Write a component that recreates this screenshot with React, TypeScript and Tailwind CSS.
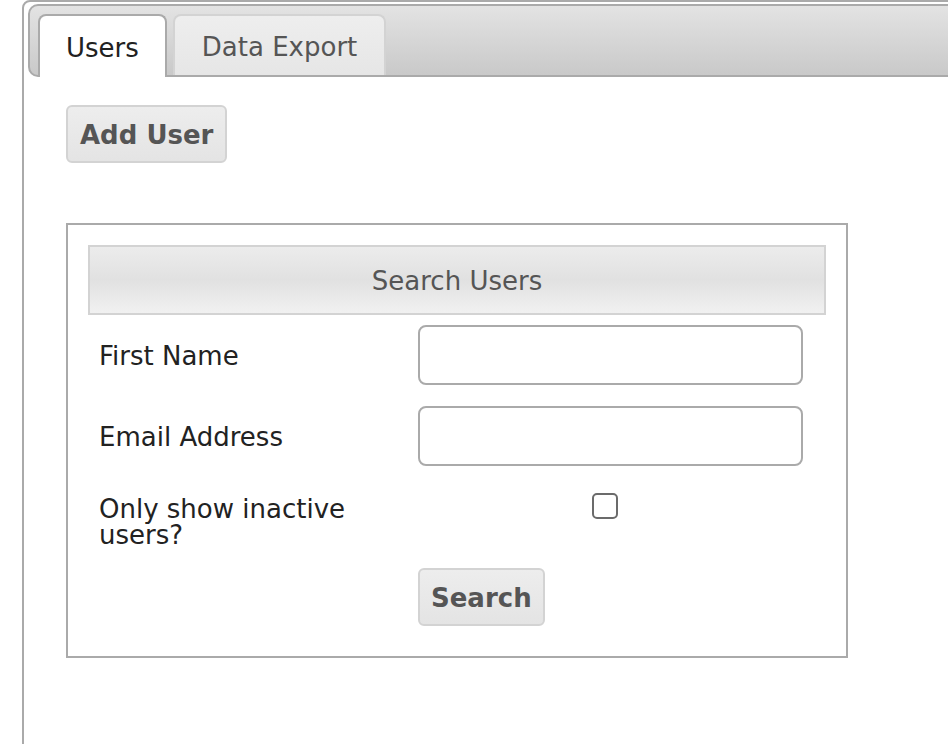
import React from "react";

export default function App() {
  return (
    <div className="h-[744px] overflow-hidden bg-white font-['DejaVu_Sans',Verdana,sans-serif] text-[26px]">
      <div className="ml-[22px] w-[960px] h-[800px] border-2 border-[#aaa] rounded-[8px] pt-[2px] px-[4px]">
        {/* Tab bar */}
        <div className="h-[73px] border-2 border-[#aaa] rounded-[10px] bg-linear-to-b from-[#e3e3e3] to-[#c9c9c9] pt-[8px] px-[8px] flex items-start gap-[6px]">
          <div className="relative z-10 h-[63px] -mb-[2px] px-[26px] pt-[3px] flex items-center bg-white border-2 border-b-0 border-[#aaa] rounded-t-[8px] text-[#212121]">
            Users
          </div>
          <div className="h-[61px] px-[27px] pt-[3px] flex items-center bg-linear-to-b from-[#eeeeee] to-[#e6e6e6] border-2 border-b-0 border-[#d3d3d3] rounded-t-[8px] text-[#555]">
            Data Export
          </div>
        </div>

        {/* Users panel */}
        <div className="pt-[28px] pl-[38px]">
          <button className="h-[58px] px-[12px] pt-[2px] border-2 border-[#d3d3d3] rounded-[6px] bg-linear-to-b from-[#ededed] to-[#e4e4e4] font-bold text-[#555] leading-none">
            Add User
          </button>

          <div className="mt-[60px] w-[782px] border-2 border-[#aaa] p-[20px] pb-[30px]">
            <div className="h-[70px] pt-[2px] border-2 border-[#d3d3d3] bg-linear-to-b from-[#ececec] via-[#e1e1e1] to-[#f1f1f1] flex items-center justify-center text-[#555]">
              Search Users
            </div>

            <div className="mt-[10px] flex items-center">
              <label className="w-[330px] pl-[11px] pt-[3px] text-[#222]">First Name</label>
              <input className="w-[385px] h-[60px] border-2 border-[#aaa] rounded-[8px] px-3 outline-none" />
            </div>

            <div className="mt-[21px] flex items-center">
              <label className="w-[330px] pl-[11px] pt-[3px] text-[#222]">Email Address</label>
              <input className="w-[385px] h-[60px] border-2 border-[#aaa] rounded-[8px] px-3 outline-none" />
            </div>

            <div className="mt-[21px] flex items-start">
              <label className="w-[330px] pl-[11px] pr-[50px] pt-[9px] leading-[26px] text-[#222]">
                Only show inactive users?
              </label>
              <div className="w-[385px] pt-[6px] pl-[174px]">
                <input
                  type="checkbox"
                  className="appearance-none block w-[26px] h-[26px] border-2 border-[#6b6b6b] rounded-[5px] bg-white"
                />
              </div>
            </div>

            <div className="mt-[20px] pl-[330px]">
              <button className="h-[58px] px-[11px] pt-[2px] border-2 border-[#d3d3d3] rounded-[6px] bg-linear-to-b from-[#ededed] to-[#e4e4e4] font-bold text-[#555] leading-none">
                Search
              </button>
            </div>
          </div>
        </div>
      </div>
    </div>
  );
}
